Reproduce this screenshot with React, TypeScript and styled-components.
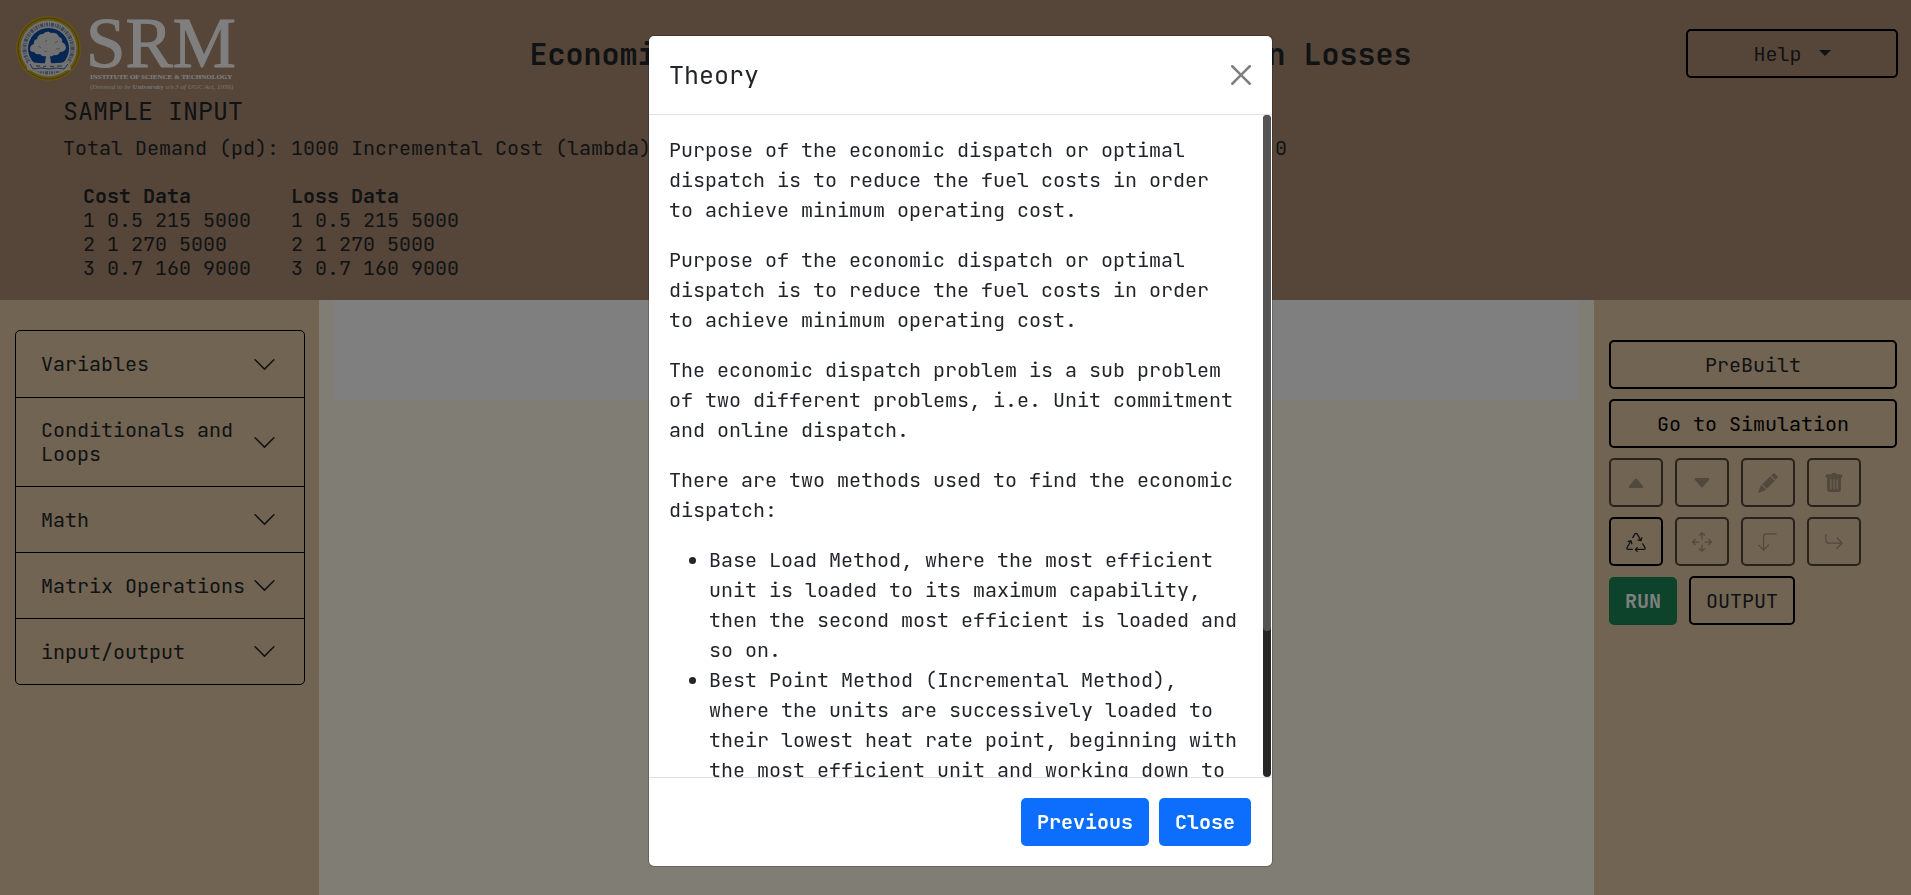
import React, { ReactNode } from 'react';
import styled, { createGlobalStyle, css } from 'styled-components';
import {
  BsCaretUpFill,
  BsCaretDownFill,
  BsRecycle,
  BsArrowsMove,
  BsArrowReturnRight,
  BsArrow90DegDown,
  BsChevronDown,
} from 'react-icons/bs';

const mono = '"JetBrains Mono", "DejaVu Sans Mono", "Liberation Mono", monospace';

const GlobalStyle = createGlobalStyle`
  *, *::before, *::after { box-sizing: border-box; }
  html, body, #root { height: 100%; }
  body {
    margin: 0;
    overflow: hidden;
    background: #fffae8;
    color: #212529;
    font: 400 20px/30px ${mono};
  }
  h1, h2, p, ul { margin: 0; }
  button { font: inherit; color: inherit; }
`;

const Page = styled.div`
  display: flex;
  flex-direction: column;
  min-height: 100vh;
`;

const Header = styled.header`
  background: #ad8d73;
  padding: 15px 13px 20px;
`;

const TitleRow = styled.div`
  display: grid;
  grid-template-columns: 242px 1fr 212px;
  align-items: center;
`;

const Title = styled.h1`
  font-size: 30px;
  line-height: 36px;
  font-weight: 700;
  text-align: center;
`;

const Sample = styled.section`
  padding: 4px 50px 0;
`;

const SampleTitle = styled.h2`
  font-size: 25px;
  line-height: 30px;
  font-weight: 400;
  margin-bottom: 7px;
`;

const SampleTable = styled.table`
  margin-top: 21px;
  border-collapse: collapse;
  line-height: 24px;

  th, td {
    padding: 0 20px;
    text-align: left;
  }
`;

const OutlineButton = styled.button<{ $wide?: boolean; $strong?: boolean }>`
  height: 49px;
  padding: 0 15px;
  border: 2px solid #000;
  border-radius: 5px;
  background: transparent;
  ${({ $wide }) => $wide && css`width: 100%;`}
  ${({ $strong }) => $strong && css`color: #000;`}
`;

const Caret = styled.span`
  display: inline-block;
  margin-left: 17px;
  vertical-align: 5px;
  border: 6px solid transparent;
  border-top-color: currentColor;
  border-bottom: 0;
`;

const Workspace = styled.main`
  flex: 1;
  display: grid;
  grid-template-columns: 1fr 4fr 317px;
`;

const Side = styled.aside<{ $top: number }>`
  background: #e3c9a4;
  padding: ${({ $top }) => $top}px 14px 15px 15px;
`;

const Canvas = styled.section`
  background: #fffae8;
  padding: 0 15px;
`;

const Sheet = styled.div`
  height: 100px;
  background: #fff;
`;

const Accordion = styled.div`
  border: 1px solid #000;
  border-radius: 5px;
`;

const AccordionButton = styled.button`
  display: flex;
  align-items: center;
  justify-content: space-between;
  width: 100%;
  min-height: 66px;
  padding: 20px 27px 20px 25px;
  border: 0;
  background: transparent;
  line-height: 24px;
  text-align: left;

  & + & {
    border-top: 1px solid #000;
  }

  svg {
    flex: none;
    width: 25px;
    height: 25px;
  }
`;

const Tools = styled.div`
  display: flex;
  flex-direction: column;
  gap: 10px;
`;

const ToolRow = styled.div`
  display: flex;
  align-items: center;
  gap: 12px;
`;

const IconButton = styled.button`
  display: flex;
  align-items: center;
  justify-content: center;
  width: 54px;
  height: 49px;
  padding: 0;
  border: 2px solid #000;
  border-radius: 5px;
  background: transparent;

  svg {
    width: 20px;
    height: 20px;
  }

  &:disabled {
    opacity: 0.65;
  }

  &:disabled svg {
    opacity: 0.5;
  }
`;

const SolidButton = styled.button<{ $color: string }>`
  height: 48px;
  padding: 0 16px;
  border: 0;
  border-radius: 5px;
  background: ${({ $color }) => $color};
  color: #fff;
  font-weight: 700;
`;

const Backdrop = styled.div`
  position: fixed;
  inset: 0;
  display: flex;
  justify-content: center;
  padding: 35px 0 28px 10px;
  background: rgba(0, 0, 0, 0.5);
`;

const Dialog = styled.div`
  display: flex;
  flex-direction: column;
  width: 625px;
  height: 100%;
  border: 1px solid rgba(0, 0, 0, 0.2);
  border-radius: 6px;
  background: #fff;
  background-clip: padding-box;
`;

const DialogHeader = styled.div`
  display: flex;
  align-items: center;
  justify-content: space-between;
  padding: 20px 21px 20px 20px;
  border-bottom: 1px solid #dee2e6;
`;

const DialogTitle = styled.h2`
  font-size: 25px;
  line-height: 38px;
  font-weight: 400;
`;

const CloseButton = styled.button`
  display: flex;
  padding: 0;
  border: 0;
  background: transparent;
  color: #000;
  opacity: 0.5;
`;

const DialogBody = styled.div`
  flex: 1;
  display: flex;
  min-height: 0;
  padding-right: 1px;
`;

const DialogText = styled.div`
  flex: 1;
  overflow-y: auto;
  scrollbar-width: none;
  padding: 20px;

  p { margin-bottom: 20px; }
  ul { padding-left: 40px; }
`;

const ScrollTrack = styled.div`
  width: 8px;
  border-radius: 4px;
  background: #262626;
`;

const ScrollThumb = styled.div`
  height: 78%;
  border-radius: 4px;
  background: #555;
`;

const DialogFooter = styled.div`
  display: flex;
  justify-content: flex-end;
  gap: 10px;
  padding: 20px 21px 20px 20px;
  border-top: 1px solid #dee2e6;
`;

function Logo() {
  const serif = '"Liberation Serif", serif';
  return (
    <svg width="226" height="77" viewBox="13 15 226 77" role="img" aria-label="SRM Institute of Science and Technology">
      <circle cx="48.500" cy="48.500" r="32.500" fill="#c9a61c" />
      <circle cx="48.500" cy="48.500" r="30.500" fill="none" stroke="#8f7a10" strokeWidth="1" />
      <circle cx="48.500" cy="48.500" r="28" fill="#e4e4e4" />
      <circle cx="48.500" cy="48.500" r="24" fill="none" stroke="#7f91b2" strokeWidth="4" strokeDasharray="2 1 1 1 3 1 1 1" pathLength="150" />
      <circle cx="48.500" cy="48.500" r="20.500" fill="#0b4aa6" />
      <g fill="#e4e4e4">
        <path d="M28 61q10 3 20 2q10 1 21-2l2 9q-11 2-22 1q-11 1-22-1z" />
        <path d="M30 49q0-4 4-5q-1-4 3-5q1-5 6-5q4-4 8-1q6-1 8 4q4 1 3 5q4 2 4 6q-1 4-6 4q-2 4-6 3q-2 2-4 1l1 7q2 2 5 3h-15q3-1 4-3l1-7q-4 1-6-2q-4 1-6-2q-4 0-4-3z" />
      </g>
      <g fill="none" stroke="#4a628f" strokeWidth="1">
        <path d="M30 64l3 5q8-2 16 0q8-2 15 0l4-5" />
        <path d="M36 66l4 0M43 67l3-1M50 66l4 1M57 66l5 0" />
        <path d="M38 46l3 2M55 43l3-2M45 42l2-2M56 49l4 0M44 51l3 1" stroke="#8fa3c4" />
      </g>
      <g fill="#fff" fontFamily={serif}>
        <text x="86" y="67" fontSize="71" stroke="#fff" strokeWidth="1">SRM</text>
        <text x="90" y="79" fontSize="7" fontWeight="700">INSTITUTE OF SCIENCE &amp; TECHNOLOGY</text>
        <text x="90" y="89" fontSize="7" fontStyle="italic" opacity="0.75">
          (Deemed to be <tspan fontWeight="700" fontStyle="normal">University</tspan> u/s 3 of UGC Act, 1956)
        </text>
      </g>
    </svg>
  );
}

function PencilIcon() {
  return (
    <svg viewBox="0 0 20 20" fill="currentColor" aria-hidden="true">
      <path d="M15.200 0.500q.7-.6 1.400 0l2.900 2.900q.7.700 0 1.400l-2 2-4.300-4.300z" />
      <path d="M12.300 3.300l4.400 4.400-8 8-4.400-4.400z" />
      <path d="M3.500 12.100l4.400 4.400-1 1-5.900 2.300q-.9.200-.7-.7l2.300-6z" />
    </svg>
  );
}

function TrashIcon() {
  return (
    <svg viewBox="0 0 20 20" fill="currentColor" aria-hidden="true">
      <path
        fillRule="evenodd"
        d="M3 1.200h4.500q.2-1.200 1.300-1.200h2.400q1.100 0 1.300 1.200H17q1.200 0 1.200 1.300v1.200q0 1.300-1.200 1.300v11.700q0 2.300-2.300 2.300H5.300Q3 19 3 16.700V5Q1.800 5 1.800 3.700V2.500Q1.800 1.200 3 1.200zM6.200 6.200v10h1.200v-10zM9.400 6.200v10h1.200v-10zM12.600 6.200v10h1.200v-10z"
      />
    </svg>
  );
}

const sections = ['Variables', 'Conditionals and Loops', 'Math', 'Matrix Operations', 'input/output'];

const samples = [
  ['1 0.5 215 5000', '1 0.5 215 5000'],
  ['2 1 270 5000', '2 1 270 5000'],
  ['3 0.7 160 9000', '3 0.7 160 9000'],
];

type Tool = { label: string; icon: ReactNode; enabled?: boolean };

const toolRows: Tool[][] = [
  [
    { label: 'Move up', icon: <BsCaretUpFill /> },
    { label: 'Move down', icon: <BsCaretDownFill /> },
    { label: 'Edit', icon: <PencilIcon /> },
    { label: 'Delete', icon: <TrashIcon /> },
  ],
  [
    { label: 'Reset', icon: <BsRecycle />, enabled: true },
    { label: 'Move', icon: <BsArrowsMove /> },
    { label: 'Outdent', icon: <BsArrow90DegDown /> },
    { label: 'Indent', icon: <BsArrowReturnRight /> },
  ],
];

function TheoryDialog() {
  return (
    <Backdrop>
      <Dialog role="dialog" aria-modal="true" aria-labelledby="theory-title">
        <DialogHeader>
          <DialogTitle id="theory-title">Theory</DialogTitle>
          <CloseButton type="button" aria-label="Close">
            <svg width="20" height="20" viewBox="0 0 16 16" fill="currentColor">
              <path d="M.293.293a1 1 0 0 1 1.414 0L8 6.586 14.293.293a1 1 0 1 1 1.414 1.414L9.414 8l6.293 6.293a1 1 0 0 1-1.414 1.414L8 9.414l-6.293 6.293a1 1 0 0 1-1.414-1.414L6.586 8 .293 1.707a1 1 0 0 1 0-1.414z" />
            </svg>
          </CloseButton>
        </DialogHeader>
        <DialogBody>
          <DialogText>
            <p>Purpose of the economic dispatch or optimal dispatch is to reduce the fuel costs in order to achieve minimum operating cost.</p>
            <p>Purpose of the economic dispatch or optimal dispatch is to reduce the fuel costs in order to achieve minimum operating cost.</p>
            <p>The economic dispatch problem is a sub problem of two different problems, i.e. Unit commitment and online dispatch.</p>
            <p>There are two methods used to find the economic dispatch:</p>
            <ul>
              <li>Base Load Method, where the most efficient unit is loaded to its maximum capability, then the second most efficient is loaded and so on.</li>
              <li>Best Point Method (Incremental Method), where the units are successively loaded to their lowest heat rate point, beginning with the most efficient unit and working down to the least efficient unit.</li>
            </ul>
          </DialogText>
          <ScrollTrack>
            <ScrollThumb />
          </ScrollTrack>
        </DialogBody>
        <DialogFooter>
          <SolidButton type="button" $color="#0d6efd">Previous</SolidButton>
          <SolidButton type="button" $color="#0d6efd">Close</SolidButton>
        </DialogFooter>
      </Dialog>
    </Backdrop>
  );
}

export default function App() {
  return (
    <>
      <GlobalStyle />
      <Page>
        <Header>
          <TitleRow>
            <Logo />
            <Title>Economic Load Dispatch - With Transmission Losses</Title>
            <OutlineButton type="button" $wide>Help<Caret /></OutlineButton>
          </TitleRow>
          <Sample>
            <SampleTitle>SAMPLE INPUT</SampleTitle>
            <p>Total Demand (pd): 1000 Incremental Cost (lambda): 400 Number of Generators (n): 3 Initial Power (p):0</p>
            <SampleTable>
              <thead>
                <tr><th>Cost Data</th><th>Loss Data</th></tr>
              </thead>
              <tbody>
                {samples.map(([cost, loss]) => (
                  <tr key={cost}><td>{cost}</td><td>{loss}</td></tr>
                ))}
              </tbody>
            </SampleTable>
          </Sample>
        </Header>
        <Workspace>
          <Side $top={30}>
            <Accordion>
              {sections.map((name) => (
                <AccordionButton type="button" key={name} aria-expanded={false}>
                  {name}
                  <BsChevronDown />
                </AccordionButton>
              ))}
            </Accordion>
          </Side>
          <Canvas>
            <Sheet />
          </Canvas>
          <Side $top={40}>
            <Tools>
              <OutlineButton type="button" $wide>PreBuilt</OutlineButton>
              <OutlineButton type="button" $wide $strong>Go to Simulation</OutlineButton>
              {toolRows.map((row) => (
                <ToolRow key={row[0].label}>
                  {row.map(({ label, icon, enabled }) => (
                    <IconButton type="button" key={label} aria-label={label} disabled={!enabled}>{icon}</IconButton>
                  ))}
                </ToolRow>
              ))}
              <ToolRow>
                <SolidButton type="button" $color="#198754">RUN</SolidButton>
                <OutlineButton type="button">OUTPUT</OutlineButton>
              </ToolRow>
            </Tools>
          </Side>
        </Workspace>
      </Page>
      <TheoryDialog />
    </>
  );
}
